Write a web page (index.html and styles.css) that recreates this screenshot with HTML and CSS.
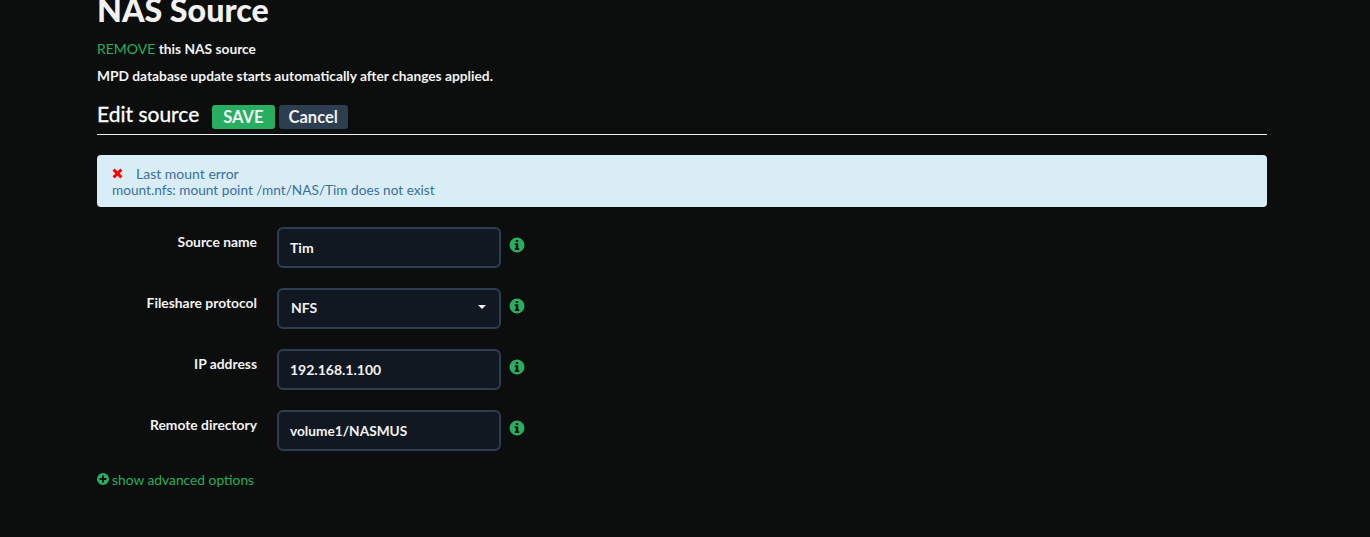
FILE: index.html
```html
<!DOCTYPE html>
<html lang="en">
<head>
<meta charset="utf-8">
<title>NAS Source</title>
<link rel="stylesheet" href="styles.css">
</head>
<body>
<main class="page">
  <h1 class="title">NAS Source</h1>
  <p class="line first"><a class="link" href="#">REMOVE</a> this NAS source</p>
  <p class="line">MPD database update starts automatically after changes applied.</p>
  <div class="legend">
    <span class="legend-text">Edit source</span>
    <button class="btn btn-save" type="button">SAVE</button>
    <button class="btn btn-cancel" type="button">Cancel</button>
  </div>
  <div class="alert">
    <div class="alert-head"><svg class="x-icon" viewBox="0 0 12 12" aria-hidden="true"><path d="M2.9.6 6 3.7 9.1.6 11.4 2.9 8.3 6 11.4 9.1 9.1 11.4 6 8.3 2.9 11.4.6 9.1 3.7 6 .6 2.9z"/></svg><span>Last mount error</span></div>
    <div>mount.nfs: mount point /mnt/NAS/Tim does not exist</div>
  </div>
  <form class="form">
    <div class="row">
      <label class="label">Source name</label>
      <div class="field">Tim</div>
      <svg class="info" viewBox="0 0 16 16" aria-hidden="true"><path fill-rule="evenodd" d="M8 .5a7.5 7.5 0 1 0 0 15 7.5 7.5 0 0 0 0-15zM6.8 2.9h2.4v2.2H6.8zM5.8 6.3h3.4v5h1v1.7H5.8v-1.7h1V8H5.8z"/></svg>
    </div>
    <div class="row">
      <label class="label">Fileshare protocol</label>
      <div class="field select">NFS<span class="caret"></span></div>
      <svg class="info" viewBox="0 0 16 16" aria-hidden="true"><path fill-rule="evenodd" d="M8 .5a7.5 7.5 0 1 0 0 15 7.5 7.5 0 0 0 0-15zM6.8 2.9h2.4v2.2H6.8zM5.8 6.3h3.4v5h1v1.7H5.8v-1.7h1V8H5.8z"/></svg>
    </div>
    <div class="row">
      <label class="label">IP address</label>
      <div class="field">192.168.1.100</div>
      <svg class="info" viewBox="0 0 16 16" aria-hidden="true"><path fill-rule="evenodd" d="M8 .5a7.5 7.5 0 1 0 0 15 7.5 7.5 0 0 0 0-15zM6.8 2.9h2.4v2.2H6.8zM5.8 6.3h3.4v5h1v1.7H5.8v-1.7h1V8H5.8z"/></svg>
    </div>
    <div class="row">
      <label class="label">Remote directory</label>
      <div class="field field-narrow">volume1/NASMUS</div>
      <svg class="info" viewBox="0 0 16 16" aria-hidden="true"><path fill-rule="evenodd" d="M8 .5a7.5 7.5 0 1 0 0 15 7.5 7.5 0 0 0 0-15zM6.8 2.9h2.4v2.2H6.8zM5.8 6.3h3.4v5h1v1.7H5.8v-1.7h1V8H5.8z"/></svg>
    </div>
  </form>
  <a class="advanced" href="#"><svg class="plus" viewBox="0 0 12 12" aria-hidden="true"><path fill-rule="evenodd" d="M6 0a6 6 0 1 0 0 12A6 6 0 0 0 6 0zM5 2.6h2V5h2.4v2H7v2.4H5V7H2.6V5H5z"/></svg>show advanced options</a>
</main>
</body>
</html>
```
FILE: styles.css
```css
html, body {
  margin: 0;
  height: 100%;
  overflow: hidden;
  background: #0c0d0d;
}
body {
  font-family: Lato, "Liberation Sans", sans-serif;
  font-size: 14px;
  font-weight: 700;
  color: #f2f2f2;
}
.page {
  width: 1170px;
  margin-left: 97px;
}
.title {
  margin: -8px 0 0;
  font-size: 32.2px;
  line-height: 36px;
  font-weight: 900;
  color: #f2f2f2;
}
.line {
  margin: 0;
  font-size: 13.75px;
  line-height: 20px;
  height: 27px;
}
.line.first {
  margin-top: 11px;
}
.link {
  color: #27ae60;
  font-weight: 400;
  font-size: 14px;
  text-decoration: none;
}
.legend {
  display: flex;
  align-items: center;
  height: 34px;
  margin-top: 7px;
  border-bottom: 1px solid #f2f2f2;
}
.legend-text {
  font-size: 21px;
  font-weight: 400;
  color: #fff;
  margin-right: 13px;
  margin-top: -8px;
  -webkit-text-stroke: 0.3px #fff;
}
.btn {
  border: 0;
  border-radius: 3px;
  height: 24px;
  padding: 0 10px;
  font-family: inherit;
  font-size: 16.5px;
  font-weight: 700;
  color: #f2f2f2;
  margin-right: 4px;
  margin-top: -1px;
}
.btn-save {
  padding: 0 11px;
  background: #27ae60;
}
.btn-cancel {
  background: #2c3e50;
}
.alert {
  margin-top: 20px;
  height: 52px;
  box-sizing: border-box;
  padding: 10px 15px;
  border-radius: 4px;
  background: #d9edf7;
  color: #3a6f9c;
  font-size: 13.65px;
  font-weight: 400;
  line-height: 17px;
}
.alert-head {
  display: flex;
  align-items: center;
  font-size: 14px;
}
.x-icon {
  width: 11px;
  height: 11px;
  margin-right: 13px;
  fill: #f00;
}
.form {
  margin-top: 20px;
}
.row {
  display: flex;
  align-items: flex-start;
  height: 41px;
  margin-bottom: 20px;
}
.label {
  width: 160px;
  text-align: right;
  font-size: 13.85px;
  line-height: 20px;
  padding-top: 5px;
  margin-right: 20px;
}
.field {
  position: relative;
  box-sizing: border-box;
  width: 224px;
  height: 41px;
  padding-left: 11px;
  border: 2px solid #2c3e50;
  border-radius: 6px;
  background: #111821;
  color: #f2f2f2;
  font-size: 14px;
  line-height: 38px;
}
.field-narrow {
  font-size: 13.7px;
}
.select {
  padding-left: 12px;
  line-height: 36px;
}
.caret {
  position: absolute;
  top: 15px;
  right: 13px;
  border-style: solid;
  border-width: 4px 4px 0;
  border-color: #f2f2f2 transparent transparent;
}
.info {
  width: 16px;
  height: 16px;
  margin: 10px 0 0 7.5px;
  fill: #27ae60;
}
.advanced {
  display: flex;
  align-items: center;
  margin-top: -2px;
  height: 20px;
  font-size: 13.8px;
  font-weight: 400;
  color: #27ae60;
  text-decoration: none;
}
.plus {
  width: 12px;
  height: 12px;
  margin-right: 3px;
  fill: #27ae60;
}
```
